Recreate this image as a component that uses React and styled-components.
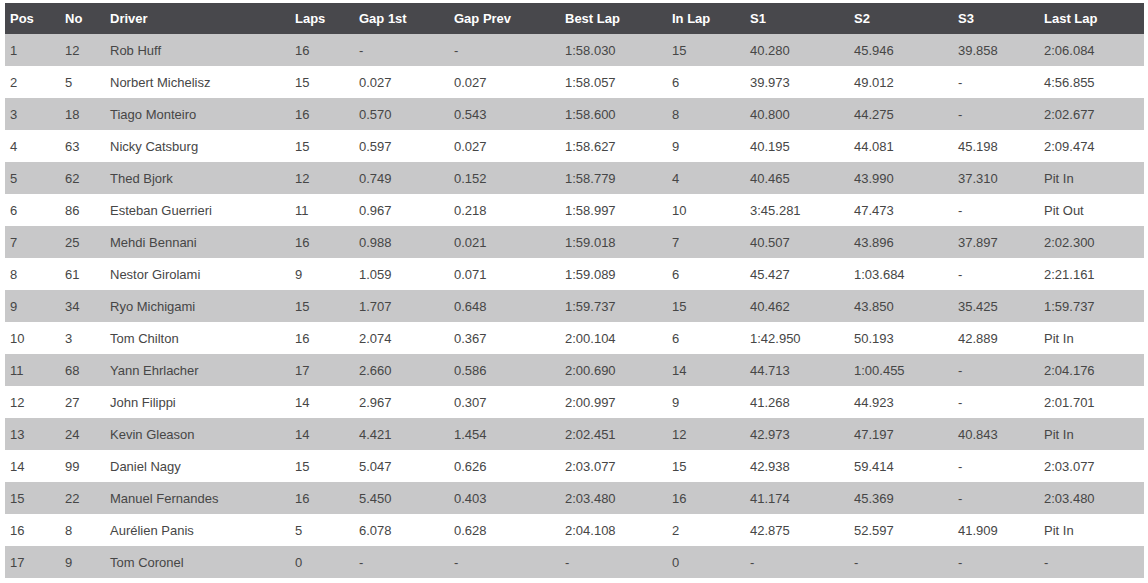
import React from 'react';
import styled, { createGlobalStyle } from 'styled-components';

const GlobalStyle = createGlobalStyle`
body {
  margin: 0;
  background: #ffffff;
  font-family: "Liberation Sans", Arial, sans-serif;
}
`

const Wrap = styled.div`
padding: 3px 4px 0 5px;
`

const Table = styled.table`
width: 1139px;
border-collapse: collapse;
table-layout: fixed;
font-size: 13px;
`

const HeadCell = styled.th`
height: 31px;
padding: 0 0 0 5px;
background-color: #48484c;
color: #ffffff;
font-weight: 700;
text-align: left;
`

const Row = styled.tr`
background-color: ${p => (p.$striped ? '#c8c8c9' : '#ffffff')};
`

const Cell = styled.td`
height: 32px;
padding: 0 0 0 5px;
color: #464646;
white-space: nowrap;
`

const columns = [
  ['Pos', 55], ['No', 45], ['Driver', 185], ['Laps', 64], ['Gap 1st', 95],
  ['Gap Prev', 111], ['Best Lap', 107], ['In Lap', 78], ['S1', 104],
  ['S2', 104], ['S3', 86], ['Last Lap', 105],
];

const results = [
  ['1', '12', 'Rob Huff', '16', '-', '-', '1:58.030', '15', '40.280', '45.946', '39.858', '2:06.084'],
  ['2', '5', 'Norbert Michelisz', '15', '0.027', '0.027', '1:58.057', '6', '39.973', '49.012', '-', '4:56.855'],
  ['3', '18', 'Tiago Monteiro', '16', '0.570', '0.543', '1:58.600', '8', '40.800', '44.275', '-', '2:02.677'],
  ['4', '63', 'Nicky Catsburg', '15', '0.597', '0.027', '1:58.627', '9', '40.195', '44.081', '45.198', '2:09.474'],
  ['5', '62', 'Thed Bjork', '12', '0.749', '0.152', '1:58.779', '4', '40.465', '43.990', '37.310', 'Pit In'],
  ['6', '86', 'Esteban Guerrieri', '11', '0.967', '0.218', '1:58.997', '10', '3:45.281', '47.473', '-', 'Pit Out'],
  ['7', '25', 'Mehdi Bennani', '16', '0.988', '0.021', '1:59.018', '7', '40.507', '43.896', '37.897', '2:02.300'],
  ['8', '61', 'Nestor Girolami', '9', '1.059', '0.071', '1:59.089', '6', '45.427', '1:03.684', '-', '2:21.161'],
  ['9', '34', 'Ryo Michigami', '15', '1.707', '0.648', '1:59.737', '15', '40.462', '43.850', '35.425', '1:59.737'],
  ['10', '3', 'Tom Chilton', '16', '2.074', '0.367', '2:00.104', '6', '1:42.950', '50.193', '42.889', 'Pit In'],
  ['11', '68', 'Yann Ehrlacher', '17', '2.660', '0.586', '2:00.690', '14', '44.713', '1:00.455', '-', '2:04.176'],
  ['12', '27', 'John Filippi', '14', '2.967', '0.307', '2:00.997', '9', '41.268', '44.923', '-', '2:01.701'],
  ['13', '24', 'Kevin Gleason', '14', '4.421', '1.454', '2:02.451', '12', '42.973', '47.197', '40.843', 'Pit In'],
  ['14', '99', 'Daniel Nagy', '15', '5.047', '0.626', '2:03.077', '15', '42.938', '59.414', '-', '2:03.077'],
  ['15', '22', 'Manuel Fernandes', '16', '5.450', '0.403', '2:03.480', '16', '41.174', '45.369', '-', '2:03.480'],
  ['16', '8', 'Aurélien Panis', '5', '6.078', '0.628', '2:04.108', '2', '42.875', '52.597', '41.909', 'Pit In'],
  ['17', '9', 'Tom Coronel', '0', '-', '-', '-', '0', '-', '-', '-', '-'],
];

export default function App() {
  return (
    <Wrap>
      <GlobalStyle />
      <Table>
        <colgroup>
          {columns.map(([name, w]) => <col key={name} style={{ width: w }} />)}
        </colgroup>
        <thead>
          <tr>
            {columns.map(([name]) => <HeadCell key={name}>{name}</HeadCell>)}
          </tr>
        </thead>
        <tbody>
          {results.map((r, i) => (
            <Row key={r[0]} $striped={i % 2 === 0}>
              {r.map((v, j) => <Cell key={j}>{v}</Cell>)}
            </Row>
          ))}
        </tbody>
      </Table>
    </Wrap>
  );
}
